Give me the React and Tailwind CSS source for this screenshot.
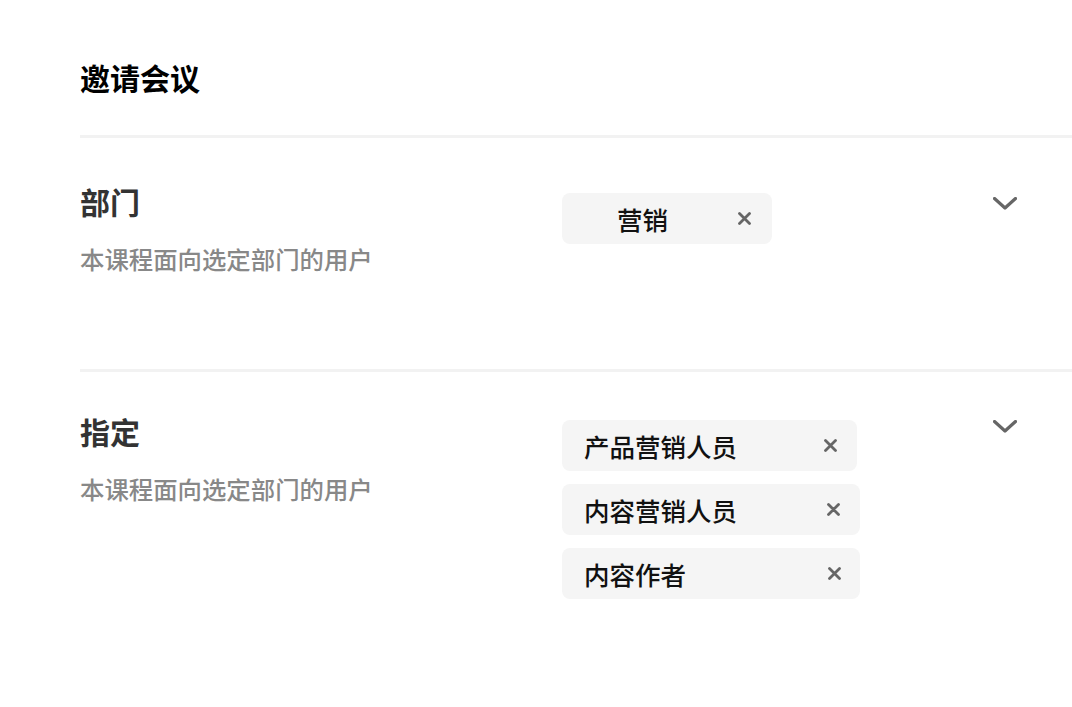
import React from 'react';

const font = { fontFamily: '"Noto Sans CJK SC", "Noto Sans", sans-serif' };

function Chevron() {
  return (
    <svg width="24" height="13" viewBox="0 0 24 13" fill="none">
      <path d="M1.5 1.5 L12 11 L22.5 1.5" stroke="#666" strokeWidth="3.2" strokeLinecap="round" strokeLinejoin="round" />
    </svg>
  );
}

function Close() {
  return (
    <svg width="13" height="13" viewBox="0 0 13 13" fill="none">
      <path d="M1.5 1.5 L11.5 11.5 M11.5 1.5 L1.5 11.5" stroke="#666" strokeWidth="2.8" strokeLinecap="round" />
    </svg>
  );
}

function Chip({ label, width, padLeft, closeRight }) {
  return (
    <div className={`flex items-center h-[51px] rounded-[8px] bg-[#f5f5f5] ${width} ${padLeft} ${closeRight}`}>
      <span className="flex-1 text-[25.5px] leading-[26px] font-medium text-[#111]">{label}</span>
      <Close />
    </div>
  );
}

export default function App() {
  return (
    <div className="bg-white h-[707px] pl-[80px] pt-[62px] overflow-hidden" style={font}>
      <h1 className="text-[30px] leading-[30px] font-bold text-black">邀请会议</h1>
      <div className="mt-[43px] h-[3px] bg-[#f2f2f2]" />

      {/* 部门 */}
      <section className="h-[231px] pt-[48px] flex">
        <div className="w-[482px]">
          <h2 className="text-[30px] leading-[30px] font-bold text-[#333]">部门</h2>
          <p className="mt-[31px] text-[24.4px] leading-[24px] font-medium text-[#888]">本课程面向选定部门的用户</p>
        </div>
        <div className="w-[431px] mt-[7px]">
          <Chip label="营销" width="w-[210px]" padLeft="pl-[55px]" closeRight="pr-[21px]" />
        </div>
        <div className="mt-[11px]">
          <Chevron />
        </div>
      </section>
      <div className="h-[3px] bg-[#f2f2f2]" />

      {/* 指定 */}
      <section className="pt-[44px] flex">
        <div className="w-[482px]">
          <h2 className="text-[30px] leading-[30px] font-bold text-[#333]">指定</h2>
          <p className="mt-[31px] text-[24.4px] leading-[24px] font-medium text-[#888]">本课程面向选定部门的用户</p>
        </div>
        <div className="w-[431px] mt-[4px] flex flex-col gap-[13px]">
          <Chip label="产品营销人员" width="w-[295px]" padLeft="pl-[22px]" closeRight="pr-[20px]" />
          <Chip label="内容营销人员" width="w-[298px]" padLeft="pl-[22px]" closeRight="pr-[20px]" />
          <Chip label="内容作者" width="w-[298px]" padLeft="pl-[22px]" closeRight="pr-[19px]" />
        </div>
        <div className="mt-[4px]">
          <Chevron />
        </div>
      </section>
    </div>
  );
}
